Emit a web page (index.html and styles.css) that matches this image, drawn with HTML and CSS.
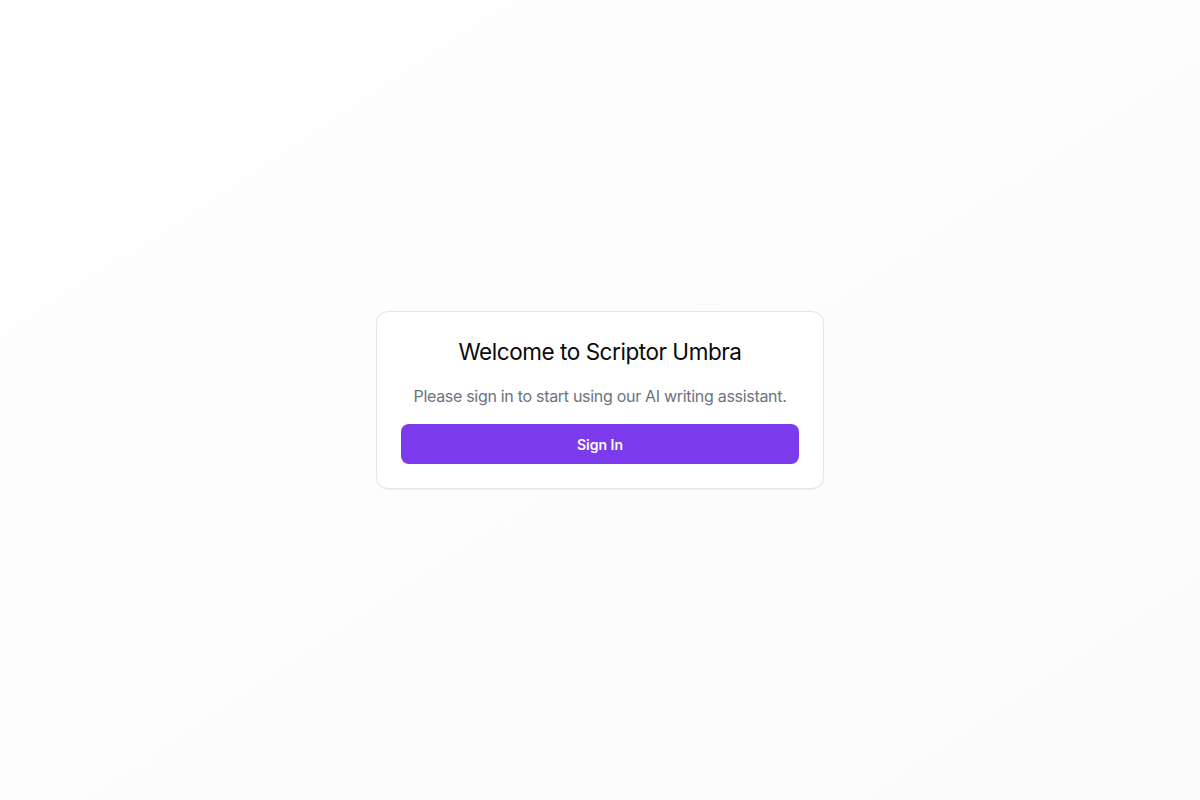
FILE: index.html
```html
<!DOCTYPE html>
<html lang="en">
<head>
<meta charset="utf-8">
<title>Scriptor Umbra</title>
<link rel="stylesheet" href="styles.css">
</head>
<body>
<main class="page">
  <section class="card">
    <h1 class="title">Welcome to Scriptor Umbra</h1>
    <p class="lead">Please sign in to start using our AI writing assistant.</p>
    <button class="btn" type="button">Sign In</button>
  </section>
</main>
</body>
</html>
```
FILE: styles.css
```css
* { box-sizing: border-box; }
html, body { margin: 0; padding: 0; height: 100%; }
body {
  font-family: Inter, "Noto Sans", sans-serif;
  background: linear-gradient(to bottom right, #ffffff, #fafafa);
  color: #0a0a0a;
}
.page {
  min-height: 100vh;
  display: flex;
  align-items: center;
  justify-content: center;
}
.card {
  width: 448px;
  background: #fff;
  border: 1px solid #e5e5e5;
  border-radius: 12px;
  padding: 24px;
  display: flex;
  flex-direction: column;
  align-items: stretch;
  gap: 16px;
  box-shadow: 0 1px 2px rgba(0,0,0,0.04);
}
.title {
  margin: 0;
  text-align: center;
  font-size: 22.5px;
  line-height: 32px;
  font-weight: 400;
  letter-spacing: -0.45px;
  color: #0a0a0a;
}
.lead {
  margin: 0;
  text-align: center;
  font-size: 16px;
  line-height: 24px;
  color: #6b7280;
  letter-spacing: -0.3px;
}
.btn {
  height: 40px;
  border: 0;
  border-radius: 8px;
  background: #7c3aed;
  color: #fff;
  font-family: inherit;
  font-size: 14px;
  font-weight: 600;
  cursor: pointer;
}
```
